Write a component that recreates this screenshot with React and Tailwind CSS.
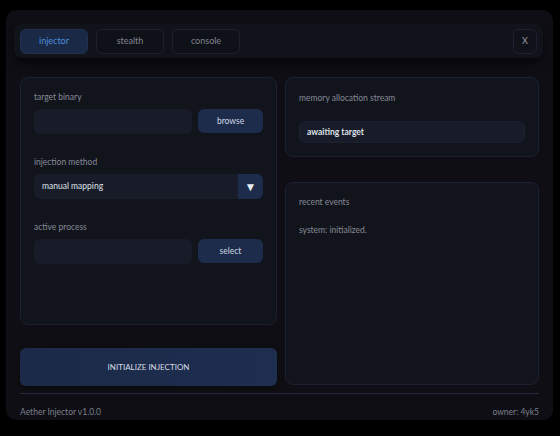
export default function App() {
  const tabs = ["injector", "stealth", "console"];
  const active = "injector";

  return (
    <div
      className="w-[560px] h-[436px] bg-black pt-[10px] pl-[6px] pr-[7px] pb-[16px]"
      style={{ fontFamily: 'Lato, "Noto Sans", sans-serif' }}
    >
      <div className="h-full bg-[#0e0e14] rounded-[10px] flex flex-col pt-[14px] pb-[1px]">
        {/* header */}
        <div className="ml-[8px] mr-[10px] h-[34px] bg-[#11131b] rounded-lg shadow-[0_6px_10px_rgba(0,0,0,0.45)] flex items-center justify-between px-[6px]">
          <div className="flex gap-2">
            {tabs.map((t) => (
              <button
                key={t}
                className={`w-[68px] h-[25px] rounded-md text-[9px] border ${
                  t === active
                    ? "bg-[#1a2946] border-[#1f3053] text-[#4d8fdf]"
                    : "bg-[#0f1118] border-[#1d202c] text-[#80838f]"
                }`}
              >
                {t}
              </button>
            ))}
          </div>
          <button className="w-[24px] h-[25px] rounded-md border border-[#1d2030] bg-[#10121a] text-[9px] text-[#9a9ca8]">
            X
          </button>
        </div>

        {/* body */}
        <div className="flex gap-2 px-[14px] mt-[19px]">
          <div className="w-[257px] flex flex-col">
            <div className="h-[248px] rounded-lg border border-[#1c2030] bg-[#12141c] px-[13px] pt-[13px]">
              <div className="text-[8.5px] leading-[12px] text-[#858996] mb-[6px]">target binary</div>
              <div className="flex gap-[6px]">
                <div className="w-[158px] h-[25px] rounded-md bg-[#181b28]" />
                <button className="w-[65px] h-[24px] rounded-md bg-[#1d2c4b] text-[8.5px] text-[#d0d6e2]">
                  browse
                </button>
              </div>

              <div className="text-[8.5px] leading-[12px] text-[#858996] mt-[22px] mb-[6px]">injection method</div>
              <div className="flex h-[25px] rounded-md bg-[#181b28] overflow-hidden">
                <div className="flex-1 flex items-center pl-[8px] text-[8.5px] text-[#dfe3ea]">
                  manual mapping
                </div>
                <div className="w-[25px] bg-[#1d2c4b] flex items-center justify-center text-[12px] text-[#e8ecf3]">
                  ▼
                </div>
              </div>

              <div className="text-[8.5px] leading-[12px] text-[#858996] mt-[22px] mb-[6px]">active process</div>
              <div className="flex gap-[6px]">
                <div className="w-[158px] h-[25px] rounded-md bg-[#181b28]" />
                <button className="w-[65px] h-[24px] rounded-md bg-[#1d2c4b] text-[8.5px] text-[#d0d6e2]">
                  select
                </button>
              </div>
            </div>

            <button className="mt-[23px] h-[38px] rounded-md bg-gradient-to-r from-[#1b2a48] to-[#1e2e4f] text-[8px] text-[#d7dce6] shadow-[0_2px_6px_rgba(0,0,0,0.4)]">
              INITIALIZE INJECTION
            </button>
          </div>

          <div className="w-[256px] flex flex-col">
            <div className="h-[80px] rounded-lg border border-[#1c2030] bg-[#12141c] px-[13px] pt-[14px]">
              <div className="text-[8.5px] leading-[12px] text-[#858996]">memory allocation stream</div>
              <div className="mt-[17px] h-[22px] rounded-md border border-[#1d2130] bg-[#181b28] flex items-center pl-[7px] text-[8.5px] font-bold text-[#dfe3ea]">
                awaiting target
              </div>
            </div>

            <div className="mt-[25px] h-[203px] rounded-lg border border-[#1c2030] bg-[#12141c] px-[13px] pt-[13px]">
              <div className="text-[8.5px] leading-[12px] text-[#858996]">recent events</div>
              <div className="mt-[16px] text-[8.5px] leading-[12px] text-[#858996]">system: initialized.</div>
            </div>
          </div>
        </div>

        <div className="mx-[14px] mt-[7px] h-px bg-[#2a2540]" />

        <div className="mt-auto px-[14px] flex justify-between text-[8.5px] leading-[13px] text-[#7c7f8b]">
          <span>Aether Injector v1.0.0</span>
          <span>owner: 4yk5</span>
        </div>
      </div>
    </div>
  );
}
